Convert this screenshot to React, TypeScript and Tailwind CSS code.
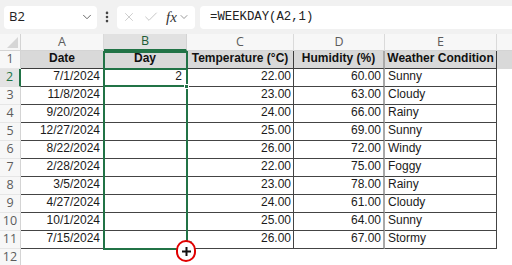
import { ChevronDown, EllipsisVertical, X, Check } from 'lucide-react';

type Row = { date: string; day: string; temp: string; hum: string; cond: string };

const rows: Row[] = [
  { date: '7/1/2024', day: '2', temp: '22.00', hum: '60.00', cond: 'Sunny' },
  { date: '11/8/2024', day: '', temp: '23.00', hum: '63.00', cond: 'Cloudy' },
  { date: '9/20/2024', day: '', temp: '24.00', hum: '66.00', cond: 'Rainy' },
  { date: '12/27/2024', day: '', temp: '25.00', hum: '69.00', cond: 'Sunny' },
  { date: '8/22/2024', day: '', temp: '26.00', hum: '72.00', cond: 'Windy' },
  { date: '2/28/2024', day: '', temp: '22.00', hum: '75.00', cond: 'Foggy' },
  { date: '3/5/2024', day: '', temp: '23.00', hum: '78.00', cond: 'Rainy' },
  { date: '4/27/2024', day: '', temp: '24.00', hum: '61.00', cond: 'Cloudy' },
  { date: '10/1/2024', day: '', temp: '25.00', hum: '64.00', cond: 'Sunny' },
  { date: '7/15/2024', day: '', temp: '26.00', hum: '67.00', cond: 'Stormy' },
];

const colLetters = ['A', 'B', 'C', 'D', 'E'];
const heads = ['Date', 'Day', 'Temperature (°C)', 'Humidity (%)', 'Weather Condition'];

function RowHead({ n, active }: { n: number; active?: boolean }) {
  return (
    <div
      className={
        active
          ? 'flex items-center justify-center bg-[#e3e3e3] border-r-2 border-r-[#217346] border-b border-b-[#e1e1e1] text-[#217346] text-[12.5px] font-["Open_Sans"]'
          : 'flex items-center justify-center bg-[#f7f7f7] border-r border-r-[#d4d4d4] border-b border-b-[#e6e6e6] text-[#5c5c5c] text-[12.5px] font-["Open_Sans"]'
      }
    >
      {n}
    </div>
  );
}

export default function App() {
  return (
    <div className="relative w-[512px] h-[265px] overflow-hidden bg-white font-['Liberation_Sans',sans-serif]">
      {/* formula bar */}
      <div className="h-[34px] bg-[#f1f1f1] flex items-center pl-1">
        <div className="w-[93px] h-[23px] bg-white rounded-[4px] flex items-center justify-between pl-[5px] pr-[3px] text-[13px] text-[#222] font-['Open_Sans']">
          <span>B2</span>
          <ChevronDown size={14} strokeWidth={1.5} className="text-[#555]" />
        </div>
        <div className="w-[20px] flex justify-center">
          <EllipsisVertical size={14} strokeWidth={2.5} className="text-[#444]" />
        </div>
        <div className="w-[78px] h-[23px] bg-white rounded-[4px] flex items-center pl-[5px] gap-[7px]">
          <X size={14} strokeWidth={1.2} className="text-[#b8b8b8]" />
          <Check size={16} strokeWidth={1.2} className="text-[#b8b8b8]" />
          <span className="flex items-center gap-[1px]">
            <span className="italic text-[15px] text-[#333] font-['Liberation_Serif',serif] leading-none">fx</span>
            <ChevronDown size={12} strokeWidth={1.5} className="text-[#777]" />
          </span>
        </div>
        <div className="ml-[5px] flex-1 h-[23px] bg-white rounded-l-[4px] flex items-center pl-[10px] text-[12.3px] text-[#222] font-['Liberation_Mono',monospace]">
          =WEEKDAY(A2,1)
        </div>
      </div>

      {/* sheet */}
      <div className="relative grid grid-cols-[21px_83px_83px_107px_91px_112px_1fr] grid-rows-[17px_repeat(12,18px)]">
        {/* column headers */}
        <div className="bg-[#f7f7f7] border-r border-b border-[#d4d4d4] flex items-end justify-end p-[2px]">
          <div className="w-0 h-0 border-l-[11px] border-l-transparent border-b-[11px] border-b-[#d6d6d6]" />
        </div>
        {colLetters.map((c) => (
          <div
            key={c}
            className={
              c === 'B'
                ? "bg-[#e1e1e1] border-r border-r-[#d4d4d4] border-b-2 border-b-[#217346] flex items-center justify-center text-[12.5px] text-[#1d5c36] font-['Open_Sans']"
                : "bg-[#f7f7f7] border-r border-r-[#dadada] border-b border-b-[#d4d4d4] flex items-center justify-center text-[12.5px] text-[#5c5c5c] font-['Open_Sans']"
            }
          >
            {c}
          </div>
        ))}
        <div className="bg-[#f7f7f7] border-b border-b-[#d4d4d4]" />

        {/* row 1 */}
        <RowHead n={1} />
        {heads.map((h, i) => (
          <div
            key={h}
            className={
              i === 3
                ? 'bg-[#d9d9d9] border-r-2 border-r-[#a9a9a9] border-b border-b-[#3c3c3c] flex items-end justify-center pb-[1px] text-[12px] font-bold text-[#111]'
                : 'bg-[#d9d9d9] border-r border-r-[#3c3c3c] border-b border-b-[#3c3c3c] flex items-end justify-center pb-[1px] text-[12px] font-bold text-[#111]'
            }
          >
            {h}
          </div>
        ))}
        <div className="bg-[#d9d9d9]" />

        {/* data */}
        {rows.map((r, idx) => (
          <div key={idx} className="contents">
            <RowHead n={idx + 2} active={idx === 0} />
            <div className="border-r border-b border-[#444] flex items-end justify-end pr-[3px] pb-[1px] text-[12px] text-[#1b1b1b]">
              {r.date}
            </div>
            <div className="border-r border-b border-[#444] flex items-end justify-end pr-[4px] pb-[1px] text-[12px] text-[#1b1b1b]">
              {r.day}
            </div>
            <div className="border-r border-b border-[#444] flex items-end justify-end pr-[2px] pb-[1px] text-[12px] text-[#1b1b1b]">
              {r.temp}
            </div>
            <div className="border-r-2 border-r-[#a9a9a9] border-b border-b-[#444] flex items-end justify-end pr-[2px] pb-[1px] text-[12px] text-[#1b1b1b]">
              {r.hum}
            </div>
            <div className="border-r border-b border-[#444] flex items-end pl-[3px] pb-[1px] text-[12px] text-[#1b1b1b]">
              {r.cond}
            </div>
            <div />
          </div>
        ))}

        {/* row 12 */}
        <RowHead n={12} />
        <div className="col-span-6" />

        {/* selection outline B1:B11 */}
        <div className="absolute left-[103px] top-[17px] w-[85px] h-[199px] border-2 border-[#217346] pointer-events-none" />
        {/* active cell B2 */}
        <div className="absolute left-[103px] top-[34px] w-[85px] h-[19px] border-2 border-[#217346] pointer-events-none" />
        <div className="absolute left-[184px] top-[50px] w-[5px] h-[5px] bg-[#217346] border border-white" />

        {/* fill handle cursor */}
        <div className="absolute left-[189px] top-[207px] w-[3px] h-[3px] bg-[#9a9a9a]" />
        <div className="absolute left-[176px] top-[206px] w-[20px] h-[22px] rounded-full border-[2.5px] border-[#e00000] bg-white flex items-center justify-center">
          <svg width="11" height="11" viewBox="0 0 11 11">
            <path d="M5.5 0.5v10M0.5 5.5h10" stroke="#fff" strokeWidth="4" />
            <path d="M5.5 1v9M1 5.5h9" stroke="#111" strokeWidth="2" />
          </svg>
        </div>
      </div>
    </div>
  );
}
